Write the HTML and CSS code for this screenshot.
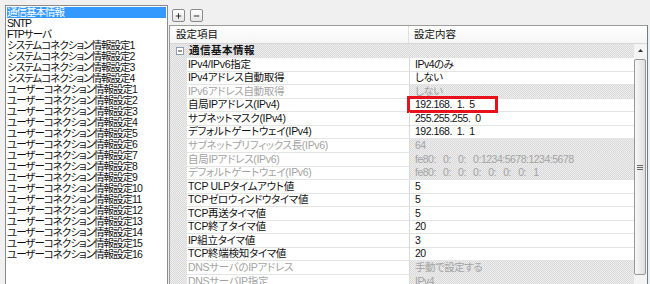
FILE: index.html
```html
<!DOCTYPE html>
<html lang="ja">
<head>
  <meta charset="UTF-8" />
  <title>通信基本情報</title>
  <link rel="stylesheet" href="styles.css">
</head>
<body>
  <div class="window">
    <ul class="tree-list">
      <li class="selected">通信基本情報</li>
      <li>SNTP</li>
      <li>FTPサーバ</li>
      <li>システムコネクション情報設定1</li>
      <li>システムコネクション情報設定2</li>
      <li>システムコネクション情報設定3</li>
      <li>システムコネクション情報設定4</li>
      <li>ユーザーコネクション情報設定1</li>
      <li>ユーザーコネクション情報設定2</li>
      <li>ユーザーコネクション情報設定3</li>
      <li>ユーザーコネクション情報設定4</li>
      <li>ユーザーコネクション情報設定5</li>
      <li>ユーザーコネクション情報設定6</li>
      <li>ユーザーコネクション情報設定7</li>
      <li>ユーザーコネクション情報設定8</li>
      <li>ユーザーコネクション情報設定9</li>
      <li>ユーザーコネクション情報設定10</li>
      <li>ユーザーコネクション情報設定11</li>
      <li>ユーザーコネクション情報設定12</li>
      <li>ユーザーコネクション情報設定13</li>
      <li>ユーザーコネクション情報設定14</li>
      <li>ユーザーコネクション情報設定15</li>
      <li>ユーザーコネクション情報設定16</li>
    </ul>

    <div class="main">
      <div class="toolbar">
        <button class="tool-btn" title="展開">
          <svg width="12" height="12" viewBox="0 0 12 12"><path d="M3 6h6M6 3v6" stroke="#222" stroke-width="1" fill="none"/></svg>
        </button>
        <button class="tool-btn" title="折りたたみ">
          <svg width="12" height="12" viewBox="0 0 12 12"><path d="M3 6h6" stroke="#222" stroke-width="1" fill="none"/></svg>
        </button>
      </div>

      <div class="grid">
        <div class="grid-head">
          <div class="head-name">設定項目</div>
          <div class="head-value">設定内容</div>
        </div>

        <div class="grid-body">
          <div class="rows">
            <div class="group-row">
              <div class="gutter">
                <svg class="toggle" width="8" height="8" viewBox="0 0 8 8"><rect x="0.5" y="0.5" width="7" height="7" fill="#fff" stroke="#8c9db3"/><path d="M2 4h4" stroke="#333"/></svg>
              </div>
              <div class="group-name">通信基本情報</div>
            </div>

            <div class="row"><div class="gutter"></div><div class="name">IPv4/IPv6指定</div><div class="value">IPv4のみ</div></div>
            <div class="row"><div class="gutter"></div><div class="name">IPv4アドレス自動取得</div><div class="value">しない</div></div>
            <div class="row disabled"><div class="gutter"></div><div class="name">IPv6アドレス自動取得</div><div class="value">しない</div></div>
            <div class="row"><div class="gutter"></div><div class="name">自局IPアドレス(IPv4)</div><div class="value">192.168.  1.  5<span class="mark"></span></div></div>
            <div class="row"><div class="gutter"></div><div class="name">サブネットマスク(IPv4)</div><div class="value">255.255.255.  0</div></div>
            <div class="row"><div class="gutter"></div><div class="name">デフォルトゲートウェイ(IPv4)</div><div class="value">192.168.  1.  1</div></div>
            <div class="row disabled"><div class="gutter"></div><div class="name">サブネットプリフィックス長(IPv6)</div><div class="value">64</div></div>
            <div class="row disabled"><div class="gutter"></div><div class="name">自局IPアドレス(IPv6)</div><div class="value">fe80:   0:   0:   0:1234:5678:1234:5678</div></div>
            <div class="row disabled"><div class="gutter"></div><div class="name">デフォルトゲートウェイ(IPv6)</div><div class="value">fe80:   0:   0:   0:   0:   0:   0:   1</div></div>
            <div class="row"><div class="gutter"></div><div class="name">TCP ULPタイムアウト値</div><div class="value">5</div></div>
            <div class="row"><div class="gutter"></div><div class="name">TCPゼロウィンドウタイマ値</div><div class="value">5</div></div>
            <div class="row"><div class="gutter"></div><div class="name">TCP再送タイマ値</div><div class="value">5</div></div>
            <div class="row"><div class="gutter"></div><div class="name">TCP終了タイマ値</div><div class="value">20</div></div>
            <div class="row"><div class="gutter"></div><div class="name">IP組立タイマ値</div><div class="value">3</div></div>
            <div class="row"><div class="gutter"></div><div class="name">TCP終端検知タイマ値</div><div class="value">20</div></div>
            <div class="row disabled"><div class="gutter"></div><div class="name">DNSサーバのIPアドレス</div><div class="value">手動で設定する</div></div>
            <div class="row disabled"><div class="gutter"></div><div class="name">DNSサーバIP指定</div><div class="value">IPv4</div></div>
          </div>

          <div class="scrollbar">
            <svg class="arrow-up" width="5" height="3" viewBox="0 0 5 3"><path d="M0 3L2.5 0L5 3Z" fill="#333"/></svg>
            <div class="thumb">
              <span class="grip"></span>
            </div>
          </div>
        </div>
      </div>
    </div>
  </div>
</body>
</html>
```

FILE: styles.css
```css
:root {
  --page-bg: #f0f0f0;
  --border: #9b9b9b;
  --row-line: #e4e4e4;
  --disabled-text: #a3a3a3;
  --select: #3399ff;
  --dither: repeating-conic-gradient(#d9d9d9 0 25%, #eeeeee 0 50%) 0 0 / 2px 2px;
}

body {
  margin: 0;
  background: var(--page-bg);
  font-family: "Liberation Sans", "Noto Sans CJK JP", sans-serif;
  font-size: 10.5px;
  font-feature-settings: "palt";
  color: #111;
  overflow: hidden;
}

.window {
  display: flex;
  gap: 1px;
  height: 284px;
  padding-left: 5px;
  box-sizing: border-box;
}

/* left list */
.tree-list {
  list-style: none;
  margin: 5px 0 0;
  padding: 1px;
  width: 163px;
  height: 300px;
  box-sizing: border-box;
  background: #fff;
  border: 1px solid #8b8b8b;
}

.tree-list li {
  height: 11px;
  line-height: 11px;
  letter-spacing: -1px;
  white-space: nowrap;
}

.tree-list li.selected {
  background: var(--select);
  color: #fff;
}

/* right side */
.main {
  display: flex;
  flex-direction: column;
  width: 479px;
}

.toolbar {
  display: flex;
  gap: 5px;
  height: 25px;
  padding: 9px 0 0 3px;
  box-sizing: border-box;
}

.tool-btn {
  width: 13px;
  height: 13px;
  padding: 0;
  display: flex;
  align-items: center;
  justify-content: center;
  border: 1px solid #8a8a8a;
  border-radius: 2px;
  background: linear-gradient(#ffffff, #e4e4e4);
}

.grid {
  flex: 1;
  display: flex;
  flex-direction: column;
  background: #fff;
  border: 1px solid var(--border);
  border-right-color: #6f7c8a;
  border-bottom: none;
  overflow: hidden;
}

.grid-head {
  display: flex;
  height: 18px;
  line-height: 17px;
  box-sizing: border-box;
  border-bottom: 1px solid #d6d6d6;
  background: linear-gradient(#ffffff, #f5f5f5);
}

.head-name {
  width: 239px;
  padding-left: 6px;
  box-sizing: border-box;
  border-right: 1px solid #e0e0e0;
}

.head-value {
  padding-left: 5px;
}

.grid-body {
  flex: 1;
  display: flex;
}

.rows {
  width: 464px;
}

.row,
.group-row {
  display: grid;
  grid-template-columns: 17px 222px 1fr;
  height: 13.57px;
  line-height: 13px;
  white-space: pre;
}

.group-row {
  background: var(--dither);
}

.gutter {
  background: var(--dither);
}

.group-row .gutter {
  background: none;
  display: flex;
  align-items: center;
  padding-left: 6px;
}

.group-name {
  grid-column: 2 / 4;
  padding-left: 2px;
  font-weight: bold;
  letter-spacing: 0.5px;
}

.name,
.value {
  box-sizing: border-box;
  border-bottom: 1px solid var(--row-line);
  overflow: hidden;
}

.name {
  padding-left: 1px;
  letter-spacing: -0.3px;
}

.value {
  position: relative;
  padding-left: 5px;
  border-left: 1px solid #d9d9d9;
  letter-spacing: -0.5px;
  overflow: visible;
}

.row.disabled .name,
.row.disabled .value {
  color: var(--disabled-text);
}

.row.disabled .value {
  background: var(--dither);
}

/* red annotation around the IP address */
.mark {
  position: absolute;
  left: -3px;
  top: -2px;
  width: 91px;
  height: 17px;
  box-sizing: border-box;
  border: 3px solid #e8101a;
}

/* scrollbar */
.scrollbar {
  width: 13px;
  background: #f4f4f4;
  display: flex;
  flex-direction: column;
  align-items: center;
}

.arrow-up {
  margin-top: 5px;
}

.thumb {
  margin-top: 7px;
  align-self: flex-start;
  width: 12px;
  height: 216px;
  box-sizing: border-box;
  border: 1px solid #979797;
  border-radius: 2px;
  background: linear-gradient(to right, #f8f8f8, #dedede);
  display: flex;
  align-items: center;
  justify-content: center;
}

.grip {
  width: 6px;
  height: 5px;
  background: repeating-linear-gradient(#666 0 1px, transparent 1px 2px);
}
```
